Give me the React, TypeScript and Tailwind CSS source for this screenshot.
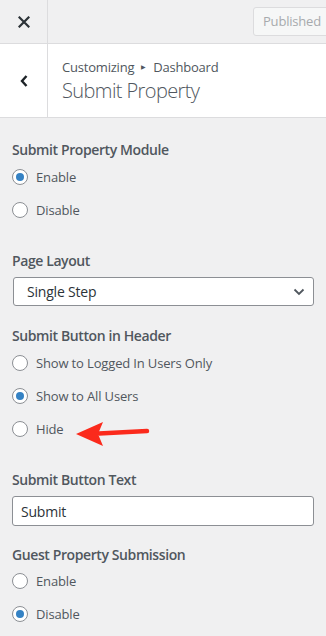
import React from "react";

const font = { fontFamily: '"Open Sans", "Noto Sans", sans-serif' };

function Radio({ label, checked = false }: { label: string; checked?: boolean }) {
  return (
    <label className="flex items-center h-[16px] gap-[8px] text-[13px] text-[#50575e] tracking-[-0.15px]">
      <span className="flex items-center justify-center w-[16px] h-[16px] rounded-full border border-[#8c8f94] bg-white shrink-0">
        {checked && <span className="w-[8px] h-[8px] rounded-full bg-[#3582c4]" />}
      </span>
      <span className="leading-none">{label}</span>
    </label>
  );
}

function Title({ children }: { children: React.ReactNode }) {
  return (
    <div className="text-[14px] font-semibold text-[#50575e] leading-[20px] tracking-[-0.4px]">{children}</div>
  );
}

export default function App() {
  return (
    <div className="w-[326px] h-[636px] bg-[#f0f0f1] overflow-hidden" style={font}>
      {/* top bar */}
      <div className="flex h-[44px] border-b border-[#dcdcde] bg-[#f0f0f1]">
        <div className="w-[48px] flex items-center justify-center border-r border-[#dcdcde]">
          <svg width="12" height="12" viewBox="0 0 12 12">
            <path d="M1.5 1.5 L10.5 10.5 M10.5 1.5 L1.5 10.5" stroke="#2c3338" strokeWidth="2.2" strokeLinecap="square" />
          </svg>
        </div>
        <div className="flex-1 flex items-center overflow-hidden">
          <div className="ml-[205px] shrink-0 w-[90px] h-[29px] px-[9px] flex items-center border border-[#dcdcde] rounded-[3px] bg-[#f6f7f7] text-[13px] text-[#a7aaad] tracking-[-0.2px] whitespace-nowrap">
            Published
          </div>
        </div>
      </div>
      {/* section header */}
      <div className="flex h-[74px] bg-white border-b border-[#dcdcde]">
        <div className="w-[48px] flex items-center justify-center border-r border-[#dcdcde]">
          <svg width="10" height="14" viewBox="0 0 10 14">
            <path d="M7.5 2 L3 7 L7.5 12" stroke="#1d2327" strokeWidth="2.4" fill="none" />
          </svg>
        </div>
        <div className="flex flex-col justify-center pl-[14px] pt-[2px]">
          <div className="flex items-center text-[13px] text-[#50575e] leading-[18px] tracking-[-0.2px]">
            Customizing
            <span className="mx-[7px] text-[6px] leading-none">▶</span>
            Dashboard
          </div>
          <div className="text-[20px] font-light text-[#50575e] leading-[28px] mt-[1px] tracking-[-0.6px]">
            Submit Property
          </div>
        </div>
      </div>
      {/* body */}
      <div className="px-[12px] pt-[22px] flex flex-col">
        <Title>Submit Property Module</Title>
        <div className="flex flex-col gap-[17px] mt-[9px]">
          <Radio label="Enable" checked />
          <Radio label="Disable" />
        </div>

        <div className="mt-[33px]">
          <Title>Page Layout</Title>
        </div>
        <div className="mt-[6px] ml-[1px] h-[29px] flex items-center justify-between bg-white border border-[#8c8f94] rounded-[3px] pl-[13px] pr-[8px] text-[14px] text-[#2c3338] tracking-[-0.2px]">
          <span>Single Step</span>
          <svg width="12" height="8" viewBox="0 0 12 8">
            <path d="M1.5 1.5 L6 6 L10.5 1.5" stroke="#50575e" strokeWidth="1.8" fill="none" />
          </svg>
        </div>

        <div className="mt-[20px]">
          <Title>Submit Button in Header</Title>
        </div>
        <div className="flex flex-col gap-[17px] mt-[9px]">
          <Radio label="Show to Logged In Users Only" />
          <Radio label="Show to All Users" checked />
          <div className="relative">
            <Radio label="Hide" />
            <svg className="absolute left-[63px] top-[-1px]" width="76" height="28" viewBox="0 0 76 28">
              <path d="M24 13.5 L72 11" stroke="#fb2a1c" strokeWidth="4.5" strokeLinecap="round" />
              <path d="M1 14 L28 2 L23 14 L28 26 Z" fill="#fb2a1c" />
            </svg>
          </div>
        </div>

        <div className="mt-[33px]">
          <Title>Submit Button Text</Title>
        </div>
        <div className="mt-[6px] h-[30px] flex items-center bg-white border border-[#8c8f94] rounded-[3px] px-[8px] text-[14px] text-[#2c3338] tracking-[-0.2px]">
          Submit
        </div>

        <div className="mt-[19px]">
          <Title>Guest Property Submission</Title>
        </div>
        <div className="flex flex-col gap-[17px] mt-[8px]">
          <Radio label="Enable" />
          <Radio label="Disable" checked />
        </div>
      </div>
    </div>
  );
}
